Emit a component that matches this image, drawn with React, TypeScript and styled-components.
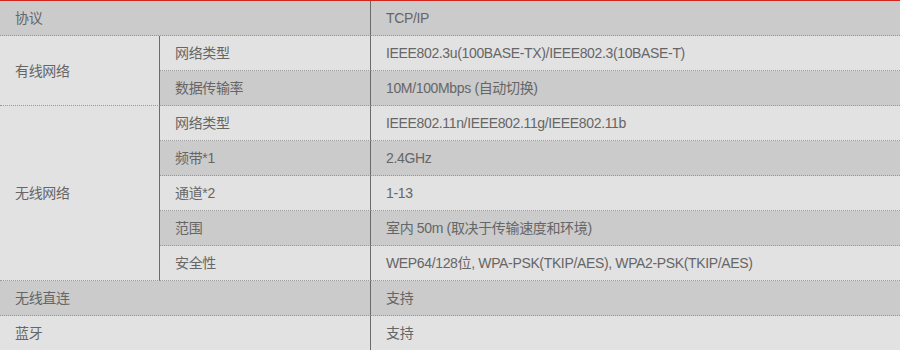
import { FC } from 'react';
import styled, { createGlobalStyle } from 'styled-components';

// ========== データ ==========

type SubRow = { label: string; value: string };

type SpecGroup =
  | { kind: 'single'; label: string; value: string }
  | { kind: 'group'; label: string; rows: SubRow[] };

const specs: SpecGroup[] = [
  { kind: 'single', label: '协议', value: 'TCP/IP' },
  {
    kind: 'group',
    label: '有线网络',
    rows: [
      { label: '网络类型', value: 'IEEE802.3u(100BASE-TX)/IEEE802.3(10BASE-T)' },
      { label: '数据传输率', value: '10M/100Mbps (自动切换)' },
    ],
  },
  {
    kind: 'group',
    label: '无线网络',
    rows: [
      { label: '网络类型', value: 'IEEE802.11n/IEEE802.11g/IEEE802.11b' },
      { label: '频带*1', value: '2.4GHz' },
      { label: '通道*2', value: '1-13' },
      { label: '范围', value: '室内 50m (取决于传输速度和环境)' },
      { label: '安全性', value: 'WEP64/128位, WPA-PSK(TKIP/AES), WPA2-PSK(TKIP/AES)' },
    ],
  },
  { kind: 'single', label: '无线直连', value: '支持' },
  { kind: 'single', label: '蓝牙', value: '支持' },
];

// ========== コンポーネント ==========

const App: FC = () => {
  let rowIndex = 0;
  const shade = () => (rowIndex++ % 2 === 0 ? 'dark' : 'light');

  return (
    <>
      <GlobalStyle />
      <SpecTable>
        <colgroup>
          <col style={{ width: 160 }} />
          <col style={{ width: 211 }} />
          <col />
        </colgroup>
        <tbody>
          {specs.map((g) => {
            if (g.kind === 'single') {
              const tone = shade();
              return (
                <Row key={g.label} $tone={tone}>
                  <Cell colSpan={2} $divider>
                    {g.label}
                  </Cell>
                  <Cell>{g.value}</Cell>
                </Row>
              );
            }
            return g.rows.map((r, i) => {
              const tone = shade();
              return (
                <Row key={g.label + r.label} $tone={tone}>
                  {i === 0 && (
                    <GroupCell rowSpan={g.rows.length} $divider>
                      {g.label}
                    </GroupCell>
                  )}
                  <Cell $divider>{r.label}</Cell>
                  <Cell>{r.value}</Cell>
                </Row>
              );
            });
          })}
        </tbody>
      </SpecTable>
    </>
  );
};

export default App;

// ========== スタイル ==========

const GlobalStyle = createGlobalStyle`
  html, body {
    margin: 0;
    padding: 0;
    background: #e2e2e2;
  }
`;

const SpecTable = styled.table`
  width: 900px;
  table-layout: fixed;
  border-collapse: separate;
  border-spacing: 0;
  border-top: 1px solid #d2231c;
  font-family: 'Liberation Sans', Arial, 'Noto Sans CJK SC', sans-serif;
  font-size: 14px;
  letter-spacing: -0.35px;
  color: #666;
`;

const Row = styled.tr<{ $tone: 'dark' | 'light' }>`
  background: ${(p) => (p.$tone === 'dark' ? '#cbcbcb' : '#e2e2e2')};
`;

const Cell = styled.td<{ $divider?: boolean }>`
  height: 34px;
  padding: 0 0 0 15px;
  vertical-align: middle;
  white-space: nowrap;
  border-bottom: 1px dotted #999;
  border-right: ${(p) => (p.$divider ? '1px solid #6b6b6b' : 'none')};
  box-sizing: content-box;
  line-height: 16px;
`;

const GroupCell = styled(Cell)`
  background: #e2e2e2;
`;
